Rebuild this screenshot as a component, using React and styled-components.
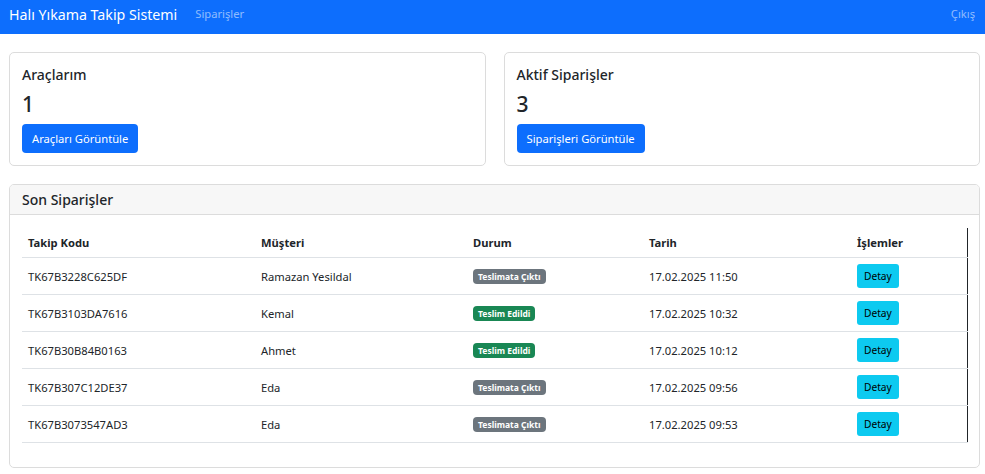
import React from 'react'
import styled, { createGlobalStyle } from 'styled-components'

const GlobalStyle = createGlobalStyle`
    * { box-sizing: border-box; }
    body {
        margin: 0;
        font-family: "Noto Sans", "Open Sans", Arial, sans-serif;
        color: #212529;
        background: #fff;
    }
`

const orders = [
    { code: 'TK67B3228C625DF', customer: 'Ramazan Yesildal', status: 'Teslimata Çıktı', date: '17.02.2025 11:50' },
    { code: 'TK67B3103DA7616', customer: 'Kemal', status: 'Teslim Edildi', date: '17.02.2025 10:32' },
    { code: 'TK67B30B84B0163', customer: 'Ahmet', status: 'Teslim Edildi', date: '17.02.2025 10:12' },
    { code: 'TK67B307C12DE37', customer: 'Eda', status: 'Teslimata Çıktı', date: '17.02.2025 09:56' },
    { code: 'TK67B3073547AD3', customer: 'Eda', status: 'Teslimata Çıktı', date: '17.02.2025 09:53' },
]

function App() {
    return (
        <>
            <GlobalStyle />
            <Navbar>
                <Brand>Halı Yıkama Takip Sistemi</Brand>
                <NavLink>Siparişler</NavLink>
                <NavRight>Çıkış</NavRight>
            </Navbar>

            <Main>
                <StatsRow>
                    <Card>
                        <CardBody>
                            <CardTitle>Araçlarım</CardTitle>
                            <StatNumber>1</StatNumber>
                            <PrimaryButton>Araçları Görüntüle</PrimaryButton>
                        </CardBody>
                    </Card>
                    <Card>
                        <CardBody>
                            <CardTitle>Aktif Siparişler</CardTitle>
                            <StatNumber>3</StatNumber>
                            <PrimaryButton>Siparişleri Görüntüle</PrimaryButton>
                        </CardBody>
                    </Card>
                </StatsRow>

                <Card>
                    <CardHeader>Son Siparişler</CardHeader>
                    <CardBody>
                        <Table>
                            <colgroup>
                                <col style={{ width: 233 }} />
                                <col style={{ width: 212 }} />
                                <col style={{ width: 176 }} />
                                <col style={{ width: 208 }} />
                                <col style={{ width: 116 }} />
                            </colgroup>
                            <thead>
                                <tr>
                                    <Th>Takip Kodu</Th>
                                    <Th>Müşteri</Th>
                                    <Th>Durum</Th>
                                    <Th>Tarih</Th>
                                    <Th>İşlemler</Th>
                                </tr>
                            </thead>
                            <tbody>
                                {orders.map((o) => (
                                    <tr key={o.code}>
                                        <Td>{o.code}</Td>
                                        <Td>{o.customer}</Td>
                                        <Td>
                                            <Badge $done={o.status === 'Teslim Edildi'}>{o.status}</Badge>
                                        </Td>
                                        <Td>{o.date}</Td>
                                        <Td>
                                            <InfoButton>Detay</InfoButton>
                                        </Td>
                                    </tr>
                                ))}
                            </tbody>
                        </Table>
                    </CardBody>
                </Card>
            </Main>
        </>
    )
}

export default App

const Navbar = styled.nav`
    height: 34px;
    background: #0d6efd;
    display: flex;
    align-items: center;
    padding: 0 10px 0 9px;
`

const Brand = styled.div`
    color: #fff;
    font-size: 14.2px;
    margin-right: 18px;
    margin-top: -6px;
`

const NavLink = styled.div`
    color: rgba(255, 255, 255, 0.55);
    font-size: 11.2px;
    margin-top: -7px;
`

const NavRight = styled(NavLink)`
    margin-left: auto;
`

const Main = styled.main`
    padding: 18px 5px 0 9px;
    display: flex;
    flex-direction: column;
    gap: 18px;
`

const StatsRow = styled.div`
    display: grid;
    grid-template-columns: 1fr 1fr;
    gap: 18px;
`

const Card = styled.div`
    border: 1px solid #dcdcdc;
    border-radius: 5px;
    background: #fff;
    overflow: hidden;
`

const CardBody = styled.div`
    padding: 13px 13px 12px 12px;
`

const CardHeader = styled.div`
    background: #f7f7f7;
    border-bottom: 1px solid #dcdcdc;
    padding: 6px 12px 5px;
    font-size: 14px;
    line-height: 18px;
    font-weight: 500;
`

const CardTitle = styled.div`
    font-size: 14px;
    line-height: 18px;
    font-weight: 500;
    margin-bottom: 7px;
`

const StatNumber = styled.div`
    font-size: 21px;
    line-height: 26px;
    font-weight: 500;
    margin-bottom: 7px;
`

const PrimaryButton = styled.button`
    height: 29px;
    padding: 0 10px;
    border: none;
    border-radius: 4px;
    background: #0d6efd;
    color: #fff;
    font-family: inherit;
    font-size: 11.2px;
    cursor: pointer;
`

const Table = styled.table`
    width: 100%;
    border-collapse: collapse;
    table-layout: fixed;
    border-right: 1.5px solid #212529;
    margin-bottom: 12px;
    font-size: 11.2px;
`

const Th = styled.th`
    text-align: left;
    font-weight: 700;
    padding: 6px;
    line-height: 17px;
    height: 29px;
    border-bottom: 1px solid #dee2e6;
`

const Td = styled.td`
    padding: 6px;
    height: 36.6px;
    vertical-align: middle;
    border-bottom: 1px solid #dee2e6;
`

const Badge = styled.span`
    display: inline-block;
    background: ${(p) => (p.$done ? '#198754' : '#6c757d')};
    color: #fff;
    font-size: 8.5px;
    font-weight: 700;
    line-height: 11px;
    padding: 2px 5px;
    border-radius: 4px;
`

const InfoButton = styled.button`
    height: 24px;
    padding: 0 7px;
    border: none;
    border-radius: 3px;
    background: #0dcaf0;
    color: #000;
    font-family: inherit;
    font-size: 10.2px;
    cursor: pointer;
`
